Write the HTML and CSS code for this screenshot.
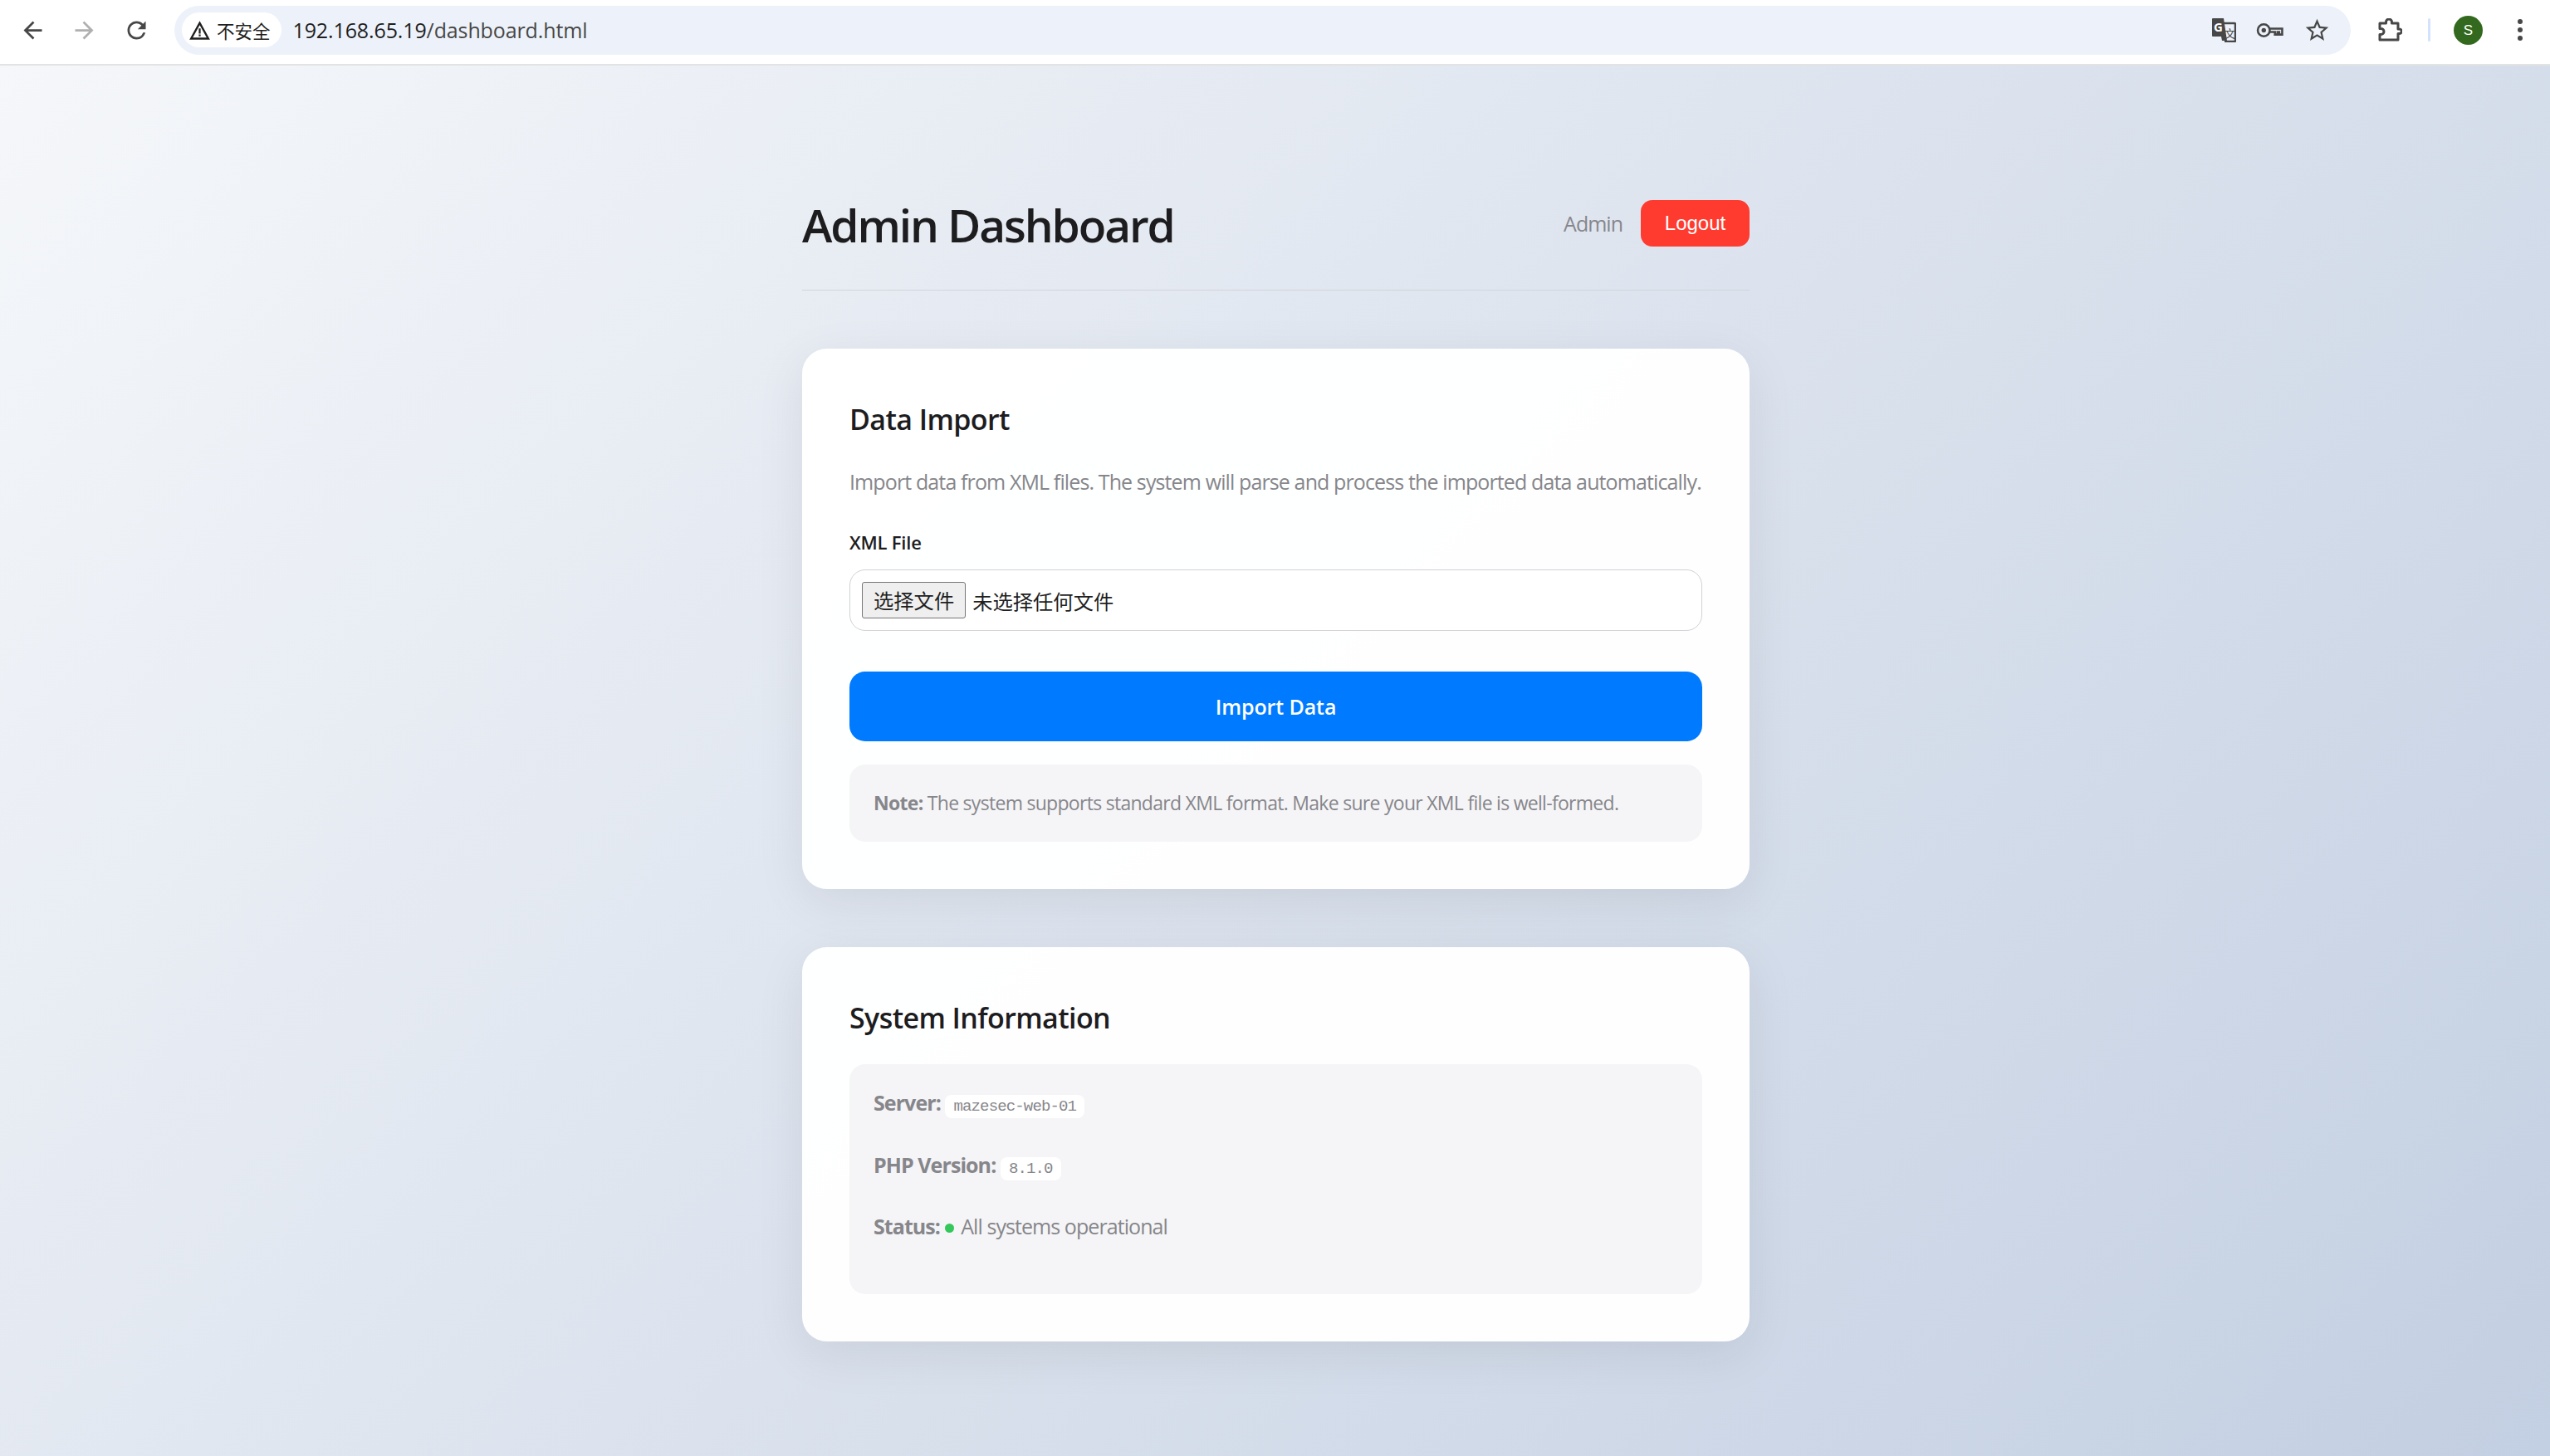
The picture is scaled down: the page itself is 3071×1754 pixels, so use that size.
FILE: index.html

```html
<!DOCTYPE html>
<html lang="en">
<head>
    <meta charset="UTF-8">
    <title>Admin Dashboard</title>
    <link rel="stylesheet" href="styles.css">
</head>
<body>
    <div class="toolbar">
        <div class="nav-btn">
            <svg class="nav-icon" viewBox="0 0 24 24"><path d="M20 11H7.83l5.59-5.59L12 4l-8 8 8 8 1.41-1.41L7.83 13H20v-2z"/></svg>
        </div>
        <div class="nav-btn disabled">
            <svg class="nav-icon" viewBox="0 0 24 24"><path d="M4 11h12.17l-5.59-5.59L12 4l8 8-8 8-1.41-1.41L16.17 13H4v-2z"/></svg>
        </div>
        <div class="nav-btn reload-btn">
            <svg class="nav-icon" viewBox="0 0 24 24"><path d="M17.65 6.35A7.958 7.958 0 0 0 12 4c-4.42 0-7.99 3.58-7.99 8s3.57 8 7.99 8c3.73 0 6.84-2.55 7.73-6h-2.08A5.99 5.99 0 0 1 12 18c-3.31 0-6-2.69-6-6s2.69-6 6-6c1.66 0 3.14.69 4.22 1.78L13 11h7V4l-2.35 2.35z"/></svg>
        </div>
        <div class="omnibox">
            <div class="security-chip">
                <svg class="warn-icon" viewBox="0 0 24 24"><path d="M1 22h22L12 2 1 22zm3.6-2.2L12 6.4l7.4 13.4H4.6zM11 16.5h2v2h-2zm0-6.5h2v5.500h-2z"/></svg>
                <span>不安全</span>
            </div>
            <div class="url"><span class="host">192.168.65.19</span>/dashboard.html</div>
            <div class="omni-icons">
                <svg class="translate-icon" viewBox="0 0 30 30">
                    <path class="fill" d="M2 1h13l4 27h-6l-1-5H2a1 1 0 0 1-1-1V2a1 1 0 0 1 1-1z"/>
                    <path class="line" d="M14 7h14a1 1 0 0 1 1 1v20a1 1 0 0 1-1 1H16"/>
                    <text class="translate-g" x="3" y="17">G</text>
                    <text class="translate-zh" x="16" y="24">文</text>
                </svg>
                <svg class="key-icon" viewBox="0 0 32 18">
                    <circle class="line" cx="9" cy="9" r="7"/>
                    <circle class="fill" cx="9" cy="9" r="2.600"/>
                    <path class="line" d="M16 7h14.500v7H27v-3h-2v3h-3v-3h-6"/>
                </svg>
                <svg class="star-icon" viewBox="0 0 24 24"><path d="M22 9.24l-7.190-.62L12 2 9.190 8.630 2 9.240l5.460 4.730L5.820 21 12 17.270 18.180 21l-1.630-7.030L22 9.240zM12 15.400l-3.760 2.270 1-4.280-3.320-2.880 4.380-.38L12 6.100l1.710 4.040 4.380.38-3.320 2.880 1 4.280L12 15.400z"/></svg>
            </div>
        </div>
        <div class="browser-actions">
            <svg class="puzzle-icon" viewBox="0 0 30 28"><path d="M3 6h7.500V4.500a3.500 3.500 0 0 1 7 0V6H25v7h1.500a2.800 2.800 0 0 1 0 5.600H25V26H3v-6.500h1.500a3.500 3.500 0 0 0 0-7H3z"/></svg>
            <div class="separator"></div>
            <div class="avatar">S</div>
            <div class="menu-dots"><i></i><i></i><i></i></div>
        </div>
    </div>

    <div class="page">
        <div class="container">
            <div class="header">
                <h1>Admin Dashboard</h1>
                <div class="user-info">
                    <span class="user-name">Admin</span>
                    <button class="logout-btn">Logout</button>
                </div>
            </div>

            <div class="card">
                <h2>Data Import</h2>
                <p class="intro">Import data from XML files. The system will parse and process the imported data automatically.</p>
                <label class="field-label">XML File</label>
                <div class="file-input">
                    <span class="file-btn">选择文件</span>
                    <span class="file-status">未选择任何文件</span>
                </div>
                <button class="import-btn">Import Data</button>
                <div class="note"><strong>Note:</strong> The system supports standard XML format. Make sure your XML file is well-formed.</div>
            </div>

            <div class="card">
                <h2>System Information</h2>
                <div class="info-box">
                    <div class="info-row"><strong>Server:</strong> <code>mazesec-web-01</code></div>
                    <div class="info-row"><strong>PHP Version:</strong> <code>8.1.0</code></div>
                    <div class="info-row"><strong>Status:</strong> <span class="status-dot"></span> All systems operational</div>
                </div>
            </div>
        </div>
    </div>
</body>
</html>
```

FILE: styles.css

```css
* {
    box-sizing: border-box;
}
html, body {
    margin: 0;
    height: 100%;
}
body {
    display: flex;
    flex-direction: column;
    overflow: hidden;
    font-family: "Open Sans", "Noto Sans CJK SC", sans-serif;
    color: #1d1d1f;
}

/* browser bar */
.toolbar {
    display: flex;
    align-items: center;
    flex: none;
    height: 79px;
    padding: 0 0 5px 8px;
    background: #fff;
    border-bottom: 2px solid #e2e3e3;
}
.nav-btn {
    display: flex;
    justify-content: center;
    width: 62px;
}
.reload-btn {
    margin-left: 1px;
}
.nav-icon {
    width: 33px;
    height: 33px;
    fill: #474747;
}
.disabled .nav-icon {
    fill: #b0b0b0;
}
.omnibox {
    display: flex;
    align-items: center;
    flex: 1;
    height: 59px;
    margin-left: 15px;
    padding: 0 24px 0 9px;
    border-radius: 30px;
    background: #edf2fa;
}
.security-chip {
    display: flex;
    align-items: center;
    gap: 7px;
    height: 42px;
    padding: 0 13px 0 8px;
    border-radius: 21px;
    background: #fff;
    font: 21.500px "Noto Sans CJK SC", sans-serif;
    color: #1f1f1f;
}
.warn-icon {
    width: 27px;
    height: 27px;
    fill: #1f1f1f;
}
.url {
    margin-left: 14px;
    font-size: 25px;
    letter-spacing: -0.120px;
    color: #474747;
}
.host {
    color: #1f1f1f;
}
.omni-icons {
    display: flex;
    align-items: center;
    gap: 24px;
    margin-left: auto;
}
.omni-icons svg {
    display: block;
}
.translate-icon {
    width: 30px;
    height: 30px;
}
.translate-icon .fill, .key-icon .fill {
    fill: #474747;
}
.translate-icon .line, .key-icon .line {
    fill: none;
    stroke: #474747;
    stroke-width: 2.500;
}
.translate-g {
    font: 700 15px "Open Sans", sans-serif;
    fill: #fff;
}
.translate-zh {
    font: 13px "Noto Sans CJK SC", sans-serif;
    fill: #474747;
}
.key-icon {
    width: 33px;
    height: 19px;
}
.star-icon {
    width: 33px;
    height: 33px;
    fill: #474747;
}
.browser-actions {
    display: flex;
    align-items: center;
    flex: none;
    width: 240px;
}
.puzzle-icon {
    width: 30px;
    height: 28px;
    margin-left: 32px;
    fill: none;
    stroke: #474747;
    stroke-width: 3;
    stroke-linejoin: round;
}
.separator {
    width: 3px;
    height: 28px;
    margin-left: 31px;
    border-radius: 2px;
    background: #d3e3fd;
}
.avatar {
    width: 35px;
    height: 35px;
    margin-left: 28px;
    border-radius: 50%;
    background: #33691e;
    color: #fff;
    font: 17px/35px "Liberation Sans", sans-serif;
    text-align: center;
}
.menu-dots {
    display: flex;
    flex-direction: column;
    gap: 4px;
    margin-left: 42px;
}
.menu-dots i {
    width: 6px;
    height: 6px;
    border-radius: 50%;
    background: #474747;
}

/* page */
.page {
    flex: 1;
    padding-left: 2px;
    background: linear-gradient(135deg, #f5f7fa 0%, #c3cfe2 100%);
}
.container {
    width: 1141px;
    margin: 0 auto;
    padding-top: 152px;
}
.header {
    display: flex;
    justify-content: space-between;
    align-items: center;
    padding-bottom: 42px;
    margin-bottom: 70px;
    border-bottom: 1px solid #d2d4da;
}
h1 {
    margin: 0;
    padding-top: 3px;
    font-size: 55px;
    font-weight: 600;
    line-height: 73px;
    letter-spacing: -2.100px;
}
.user-info {
    display: flex;
    align-items: center;
    gap: 22px;
}
.user-name {
    font-size: 25px;
    letter-spacing: -1px;
    color: #86868b;
}
.logout-btn {
    width: 131px;
    height: 56px;
    padding: 0;
    border: none;
    border-radius: 14px;
    background: #ff3b30;
    color: #fff;
    font: 24px "Liberation Sans", sans-serif;
}
.card {
    margin-bottom: 70px;
    padding: 57px;
    border-radius: 30px;
    background: rgba(255, 255, 255, 0.97);
    box-shadow: 0 15px 60px rgba(0, 0, 0, 0.08);
}
h2 {
    margin: 0;
    padding-top: 1px;
    font-size: 34px;
    font-weight: 600;
    line-height: 55px;
    letter-spacing: -0.600px;
}
.intro {
    margin: 24px 0 0;
    font-size: 25px;
    line-height: 46px;
    letter-spacing: -0.880px;
    color: #86868b;
}
.field-label {
    display: block;
    margin: 34px 0 17px;
    font-size: 22px;
    font-weight: 600;
    line-height: 32px;
    letter-spacing: -0.200px;
}
.file-input {
    display: flex;
    align-items: center;
    height: 74px;
    padding: 0 14px;
    border: 1px solid #d2d2d7;
    border-radius: 19px;
    background: #fff;
    font-family: "Noto Sans CJK SC", sans-serif;
    font-size: 24.300px;
    color: #1f1f1f;
}
.file-btn {
    padding: 0 13px;
    line-height: 42px;
    border: 1px solid #767676;
    border-radius: 3px;
    background: #efefef;
}
.file-status {
    margin-left: 8px;
}
.import-btn {
    display: block;
    width: 100%;
    height: 84px;
    margin-top: 49px;
    padding: 0;
    border: none;
    border-radius: 19px;
    background: #007aff;
    color: #fff;
    font-family: inherit;
    font-size: 25px;
    font-weight: 600;
    letter-spacing: -0.100px;
}
.note {
    height: 93px;
    margin-top: 28px;
    padding: 0 29px;
    border-radius: 19px;
    background: #f5f5f7;
    font-size: 23px;
    line-height: 92px;
    letter-spacing: -0.710px;
    color: #86868b;
}
.info-box {
    height: 277px;
    margin-top: 28px;
    padding: 26px 29px 0;
    border-radius: 19px;
    background: #f5f5f7;
}
.info-row {
    height: 40px;
    margin-bottom: 34.500px;
    font-size: 25px;
    line-height: 40px;
    letter-spacing: -0.930px;
    color: #86868b;
}
code {
    display: inline-block;
    padding: 0 10px;
    border-radius: 8px;
    background: #fff;
    font: 19px/28px "Liberation Mono", monospace;
    letter-spacing: -0.850px;
}
.status-dot {
    display: inline-block;
    width: 11px;
    height: 11px;
    margin-right: 3px;
    vertical-align: 2px;
    border-radius: 50%;
    background: #34c759;
}
```
